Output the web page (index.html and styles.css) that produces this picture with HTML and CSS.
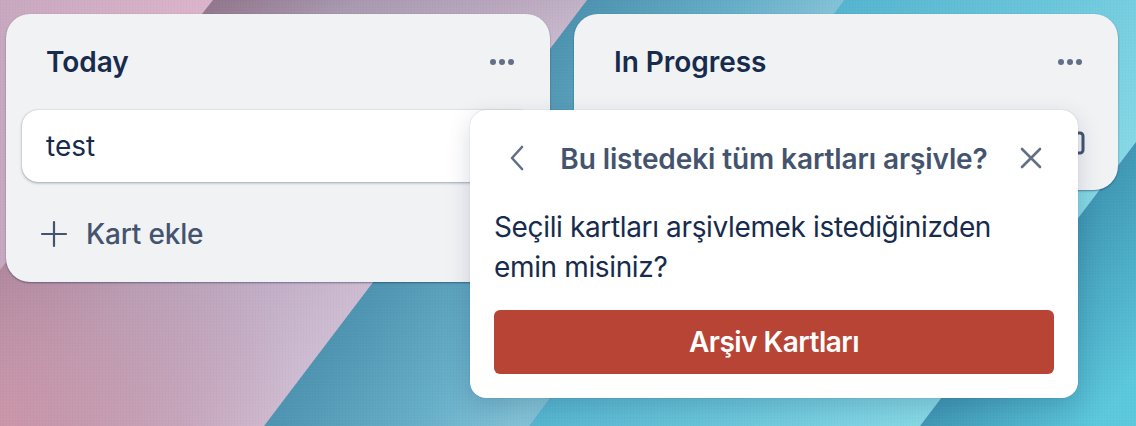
FILE: index.html
```html
<!DOCTYPE html>
<html lang="tr">
<head>
<meta charset="utf-8">
<title>Board</title>
<link rel="stylesheet" href="styles.css">
</head>
<body>
<main class="board">
  <section class="list">
    <header class="list-head">
      <h2>Today</h2>
      <button class="dots" aria-label="Menü"><i></i><i></i><i></i></button>
    </header>
    <div class="card">test</div>
    <div class="add">
      <svg class="plus" viewBox="0 0 28 28" width="28" height="28"><path d="M14 2v24M2 14h24"/></svg>
      <span>Kart ekle</span>
    </div>
  </section>
  <section class="list">
    <header class="list-head">
      <h2>In Progress</h2>
      <button class="dots" aria-label="Menü"><i></i><i></i><i></i></button>
    </header>
    <div class="add add-short">
      <svg class="template" viewBox="0 0 24 24" width="24" height="24"><path d="M5 2h13a3 3 0 0 1 3 3v14a3 3 0 0 1-3 3H5zM8 8h8M8 12h8M8 16h4"/></svg>
    </div>
  </section>
</main>
<aside class="popup">
  <header class="popup-head">
    <svg class="ico" viewBox="0 0 32 32" width="32" height="32"><path d="M20 5 10 16l10 11"/></svg>
    <h3>Bu listedeki tüm kartları arşivle?</h3>
    <svg class="ico" viewBox="0 0 32 32" width="32" height="32"><path d="M8 7l18 18M26 7 8 25"/></svg>
  </header>
  <p>Seçili kartları arşivlemek istediğinizden emin misiniz?</p>
  <button class="danger">Arşiv Kartları</button>
</aside>
</body>
</html>
```
FILE: styles.css
```css
* { box-sizing: border-box; }
html, body { margin: 0; height: 100%; }
body {
  position: relative;
  overflow: hidden;
  font-family: Inter, "Liberation Sans", sans-serif;
  color: #172b4d;
  background-color: #6fb6cc;
  background-image:
    repeating-linear-gradient(0deg, rgba(255,255,255,.018) 0 1px, transparent 1px 3px),
    repeating-linear-gradient(90deg, rgba(0,0,0,.014) 0 1px, transparent 1px 3px),
    url("data:image/svg+xml,%3Csvg xmlns='http://www.w3.org/2000/svg' width='1136' height='426'%3E%3Cdefs%3E%3ClinearGradient id='p' gradientUnits='userSpaceOnUse' x1='0' y1='0' x2='200' y2='0'%3E%3Cstop offset='0' stop-color='%23c8a8c0'/%3E%3Cstop offset='1' stop-color='%23dab4ca'/%3E%3C/linearGradient%3E%3ClinearGradient id='m' gradientUnits='userSpaceOnUse' x1='106' y1='135' x2='367' y2='336'%3E%3Cstop offset='0' stop-color='%239a7d95'/%3E%3Cstop offset='.35' stop-color='%23b2a2ba'/%3E%3Cstop offset='.7' stop-color='%23c3b0c8'/%3E%3Cstop offset='1' stop-color='%23d2c2d6'/%3E%3C/linearGradient%3E%3CradialGradient id='r' gradientUnits='userSpaceOnUse' cx='0' cy='426' r='300'%3E%3Cstop offset='0' stop-color='%23cb95a9'/%3E%3Cstop offset='1' stop-color='%23cb95a9' stop-opacity='0'/%3E%3C/radialGradient%3E%3ClinearGradient id='k' gradientUnits='userSpaceOnUse' x1='0' y1='0' x2='0' y2='60'%3E%3Cstop offset='0' stop-color='%23000' stop-opacity='.06'/%3E%3Cstop offset='1' stop-color='%23000' stop-opacity='0'/%3E%3C/linearGradient%3E%3ClinearGradient id='t' gradientUnits='userSpaceOnUse' x1='587' y1='0' x2='747' y2='123'%3E%3Cstop offset='0' stop-color='%234d93b0'/%3E%3Cstop offset='.6' stop-color='%2366aec8'/%3E%3Cstop offset='1' stop-color='%2382c2d6'/%3E%3C/linearGradient%3E%3ClinearGradient id='u' gradientUnits='userSpaceOnUse' x1='844' y1='0' x2='1094' y2='193'%3E%3Cstop offset='0' stop-color='%2355b5cf'/%3E%3Cstop offset='.5' stop-color='%2369c5da'/%3E%3Cstop offset='1' stop-color='%2385d8e6'/%3E%3C/linearGradient%3E%3ClinearGradient id='v' gradientUnits='userSpaceOnUse' x1='1028' y1='284' x2='1139' y2='369'%3E%3Cstop offset='0' stop-color='%233f97b5'/%3E%3Cstop offset='1' stop-color='%235cc8dc'/%3E%3C/linearGradient%3E%3C/defs%3E%3Crect width='1136' height='426' fill='url(%23p)'/%3E%3Cpath d='M213 0H587L264 426H0V270Z' fill='url(%23m)'/%3E%3Cpath d='M213 0H587L264 426H0V270Z' fill='url(%23r)'/%3E%3Cpath d='M213 0H587L264 426H0V270Z' fill='url(%23k)'/%3E%3Cpath d='M587 0H844L529 426H264Z' fill='url(%23t)'/%3E%3Cpath d='M844 0H1136V142L920 426H529Z' fill='url(%23u)'/%3E%3Cpath d='M1136 142V426H920Z' fill='url(%23v)'/%3E%3C/svg%3E");
}
.board {
  display: flex;
  align-items: flex-start;
  gap: 24px;
  padding: 14px 6px;
}
.list {
  width: 544px;
  background: #f1f2f4;
  border-radius: 24px;
  box-shadow: 0 1px 2px rgba(9,30,66,.45);
  padding: 0 16px 16px;
}
.list-head {
  display: flex;
  justify-content: space-between;
  align-items: center;
  height: 96px;
  padding: 0 20px 0 24px;
}
.list-head h2 {
  margin: 0;
  font-size: 28px;
  line-height: 40px;
  font-weight: 600;
  letter-spacing: -.05px;
}
.dots {
  display: flex;
  gap: 3px;
  border: 0;
  padding: 0;
  background: none;
}
.dots i { width: 6px; height: 6px; border-radius: 50%; background: #626f86; }
.card {
  background: #fff;
  border-radius: 16px;
  height: 72px;
  padding: 0 24px;
  font-size: 28px;
  line-height: 73px;
  box-shadow: 0 1px 3px rgba(9,30,66,.35), 0 0 1px rgba(9,30,66,.25);
}
.add {
  display: flex;
  align-items: center;
  gap: 18px;
  height: 64px;
  margin-top: 20px;
  padding: 0 0 0 18px;
  font-size: 28px;
  font-weight: 500;
  letter-spacing: -.2px;
  color: #44546f;
}
.add-short {
  justify-content: flex-end;
  margin-top: 0;
  padding: 1px 16px 0 0;
}
.plus path { fill: none; stroke: #44546f; stroke-width: 2.2; stroke-linecap: round; }
.template path { fill: none; stroke: #44546f; stroke-width: 3; }
.popup {
  position: absolute;
  left: 470px;
  top: 110px;
  width: 608px;
  height: 288px;
  background: #fff;
  border-radius: 16px;
  padding: 0 24px;
  box-shadow: 0 8px 24px rgba(9,30,66,.16), 0 0 1px rgba(9,30,66,.31);
}
.popup-head {
  display: flex;
  align-items: center;
  justify-content: space-between;
  height: 96px;
  padding: 0 8px;
  color: #44546f;
}
.popup-head h3 {
  margin: 0;
  padding-top: 1px;
  font-size: 28px;
  font-weight: 600;
  line-height: 40px;
  letter-spacing: -.1px;
}
.ico path { fill: none; stroke: #626f86; stroke-width: 2.6; stroke-linecap: round; stroke-linejoin: round; }
.popup p {
  margin: 0;
  padding-top: 1px;
  font-size: 28px;
  line-height: 40px;
  letter-spacing: -.36px;
}
.danger {
  display: block;
  width: 100%;
  height: 64px;
  margin-top: 23px;
  border: 0;
  border-radius: 6px;
  background: #b84435;
  color: #fff;
  font: 600 28px Inter, "Liberation Sans", sans-serif;
  letter-spacing: -.5px;
}
```
